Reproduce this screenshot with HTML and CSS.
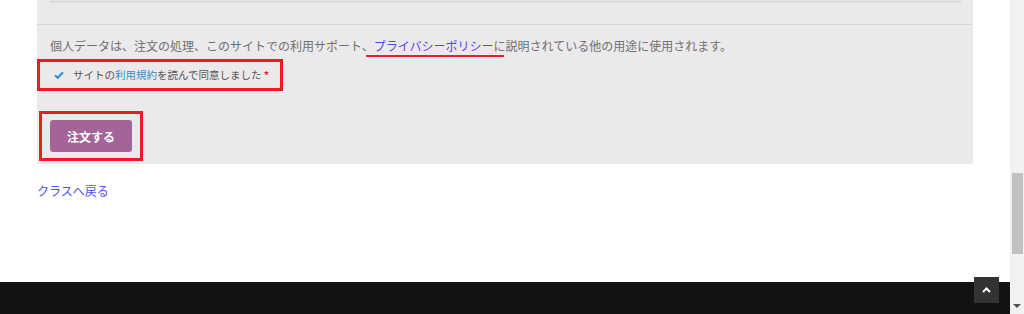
FILE: index.html
```html
<!DOCTYPE html>
<html lang="ja">
<head>
    <meta charset="UTF-8">
    <meta name="viewport" content="width=device-width, initial-scale=1.0">
    <title>注文</title>
    <link rel="stylesheet" href="styles.css">
</head>
<body>
    <div class="screen">
        <div class="page">
            <div class="content">
                <div class="payment">
                    <div class="methods">
                        <div class="payment-box"></div>
                    </div>
                    <div class="place-order">
                        <p class="privacy">個人データは、注文の処理、このサイトでの利用サポート、<span class="mark"><a href="#">プライバシーポリシー</a></span>に説明されている他の用途に使用されます。</p>
                        <div class="terms highlight">
                            <label class="terms-label">
                                <svg class="check" width="10" height="8" viewBox="0 0 10 8"><path d="M1 4.2 L3.8 6.8 L9 1.2" fill="none" stroke="#2f8ed3" stroke-width="2"/></svg>
                                <span>サイトの<a href="#">利用規約</a>を読んで同意しました <abbr class="required">*</abbr></span>
                            </label>
                        </div>
                        <div class="order-wrap highlight">
                            <button type="submit" class="order-btn">注文する</button>
                        </div>
                    </div>
                </div>
                <a href="#" class="back-link">クラスへ戻る</a>
            </div>
            <footer class="footer">
                <a href="#" class="to-top">
                    <svg width="9" height="6" viewBox="0 0 9 6"><path d="M1 5 L4.5 1.5 L8 5" fill="none" stroke="#fff" stroke-width="2"/></svg>
                </a>
            </footer>
        </div>
        <div class="scrollbar">
            <div class="thumb"></div>
            <span class="arrow"></span>
        </div>
    </div>
</body>
</html>
```

FILE: styles.css
```css
* {
    margin: 0;
    padding: 0;
    box-sizing: border-box;
}

html, body {
    height: 100%;
    overflow: hidden;
}

body {
    background: #fff;
    font-family: "Noto Sans CJK JP", "Noto Sans", sans-serif;
}

.screen {
    display: flex;
    height: 314px;
}

.page {
    flex: 1;
    display: flex;
    flex-direction: column;
}

.content {
    flex: 1;
}

/* checkout payment panel */
.payment {
    margin-left: 37px;
    width: 936px;
    background: #ebe9eb;
    padding-bottom: 3px;
}

.methods {
    height: 25px;
    border-bottom: 1px solid #d9d6d9;
}

.payment-box {
    margin: 0 12px 0 13px;
    height: 2px;
    background: #e6e4e7;
    border-bottom: 1px solid #d8d6d9;
    box-shadow: 0 1px 1px rgba(0, 0, 0, 0.04);
}

.place-order {
    padding-top: 12px;
}

.privacy {
    margin-left: 13px;
    font-size: 12px;
    line-height: 18px;
    color: #707070;
}

.privacy a {
    color: #4a4aee;
    text-decoration: none;
}

.mark {
    margin: 0 -10px 0 -8px;
    padding: 0 10px 1px 8px;
    border-bottom: 2px solid #e8202a;
}

.highlight {
    border: 3px solid #ec1c24;
}

.terms {
    margin-top: 4px;
    width: 246px;
    height: 32px;
    display: flex;
    align-items: center;
}

.terms-label {
    display: flex;
    align-items: center;
    padding-left: 14px;
    font-size: 10.5px;
    line-height: 14px;
    color: #555;
}

.check {
    margin-right: 9px;
}

.terms-label a {
    color: #3a8ccc;
    text-decoration: none;
}

.required {
    color: #e2231a;
    font-weight: bold;
    text-decoration: none;
    border: none;
}

.order-wrap {
    margin: 20px 0 0 2px;
    width: 104px;
    padding: 6px 8px;
}

.order-btn {
    display: block;
    width: 82px;
    height: 32px;
    background: #a46497;
    color: #fff;
    border: none;
    border-radius: 3px;
    font-family: inherit;
    font-size: 12px;
    font-weight: bold;
    cursor: pointer;
}

.back-link {
    display: inline-block;
    margin: 18px 0 0 37px;
    font-size: 12px;
    line-height: 18px;
    color: #4f4ff0;
    text-decoration: none;
}

/* footer */
.footer {
    position: relative;
    height: 32px;
    background: #121212;
}

.to-top {
    position: absolute;
    right: 11px;
    top: -5px;
    width: 25px;
    height: 26px;
    background: #333;
    display: flex;
    align-items: center;
    justify-content: center;
}

/* fake scrollbar */
.scrollbar {
    width: 14px;
    background: #f1f1f1;
    display: flex;
    flex-direction: column;
    align-items: center;
}

.thumb {
    margin-top: 173px;
    width: 11px;
    height: 81px;
    background: #c1c1c1;
}

.arrow {
    margin-top: auto;
    margin-bottom: 6px;
    width: 0;
    height: 0;
    border-top: 4px solid #505050;
    border-left: 4px solid transparent;
    border-right: 4px solid transparent;
}
```
